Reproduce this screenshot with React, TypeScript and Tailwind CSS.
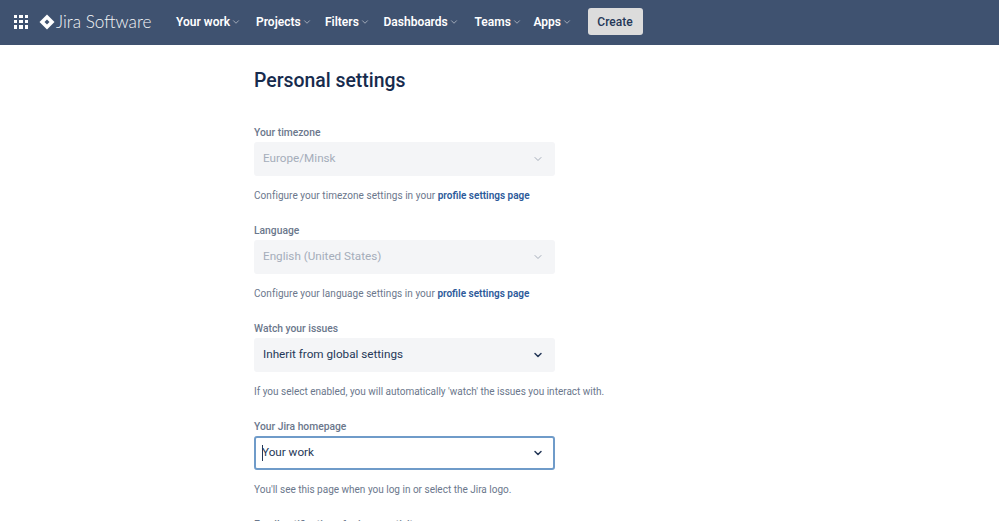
import React from 'react';
import { ChevronDown } from 'lucide-react';

const navItems = ['Your work', 'Projects', 'Filters', 'Dashboards', 'Teams', 'Apps'];

const navGaps: Record<string, string> = {
  'Your work': 'w-[80px]',
  Projects: 'w-[69px]',
  Filters: 'w-[58.5px]',
  Dashboards: 'w-[91px]',
  Teams: 'w-[59px]',
  Apps: 'w-[50px]',
};

interface FieldProps {
  label: string;
  value: string;
  disabled?: boolean;
  focused?: boolean;
  help: string;
  link?: string;
}

const Field: React.FC<FieldProps> = ({ label, value, disabled, focused, help, link }) => (
  <div className="h-[98px]">
    <div className="h-[18px] pt-[1px] text-[10.3px] leading-[17px] font-medium text-[#6b778c]">{label}</div>
    <div
      className={
        focused
          ? 'mt-[1px] h-[34px] flex items-center justify-between rounded-[3px] border-2 border-[#6f9bc9] bg-white pl-[6px] pr-[9px] text-[#253858]'
          : 'mt-[1px] h-[34px] flex items-center justify-between rounded-[3px] bg-[#f4f5f7] pl-[9px] pr-[11px] ' +
            (disabled ? 'text-[#a5adba]' : 'text-[#253858]')
      }
    >
      <span className="flex items-center text-[11.7px]">
        {focused && <span className="w-px h-[16px] bg-[#253858] -mr-px" />}
        {value}
      </span>
      <ChevronDown size={12} strokeWidth={disabled ? 2 : 3} className={disabled ? 'text-[#a5adba]' : 'text-[#253858]'} />
    </div>
    <div className="mt-[12px] text-[10px] leading-[16px] text-[#6b778c] whitespace-nowrap">
      <span className={link ? 'tracking-[0.05px]' : ''}>{help}</span>
      {link && <span className="font-semibold text-[#2c5a9a]"> {link}</span>}
    </div>
  </div>
);

const App: React.FC = () => {
  return (
    <div className="h-[521px] overflow-hidden bg-white font-['Roboto',sans-serif]">
      <header className="h-[45px] pb-[2px] flex items-center bg-[#3f5270] text-white">
        <div className="ml-[14px] w-[14px] h-[14px] grid grid-cols-3 gap-[2px]">
          {Array.from({ length: 9 }).map((_, i) => (
            <span key={i} className="bg-white" />
          ))}
        </div>
        <svg width="16" height="16" viewBox="0 0 16 16" className="ml-[11px]">
          <path d="M8 0.5 15.5 8 8 15.5 0.5 8Z" fill="#fff" />
          <path d="M8 5.5 10.5 8 8 10.5 5.5 8Z" fill="#3f5270" />
        </svg>
        <span className="ml-[1px] w-[97px] text-[17.2px] font-light whitespace-nowrap text-[#f4f5f7] font-['Lato',sans-serif]">Jira Software</span>
        <nav className="ml-[23px] flex items-center">
          {navItems.map(item => (
            <div key={item} className={navGaps[item] + ' flex items-center text-[12px] font-semibold whitespace-nowrap'}>
              {item}
              <ChevronDown size={10} strokeWidth={2} className="ml-[1px] text-[#b3bac5]" />
            </div>
          ))}
        </nav>
        <button className="ml-[4px] h-[27px] w-[55px] rounded-[3px] bg-[#dcdcdc] text-[12px] font-medium text-[#253858]">
          Create
        </button>
      </header>

      <main className="ml-[254px] w-[301px]">
        <h1 className="mt-[22px] h-[28px] text-[19.4px] leading-[28px] font-medium text-[#172b4d]">Personal settings</h1>
        <div className="mt-[28px]">
          <Field
            label="Your timezone"
            value="Europe/Minsk"
            disabled
            help="Configure your timezone settings in your"
            link="profile settings page"
          />
          <Field
            label="Language"
            value="English (United States)"
            disabled
            help="Configure your language settings in your"
            link="profile settings page"
          />
          <Field
            label="Watch your issues"
            value="Inherit from global settings"
            help="If you select enabled, you will automatically 'watch' the issues you interact with."
          />
          <Field
            label="Your Jira homepage"
            value="Your work"
            focused
            help="You'll see this page when you log in or select the Jira logo."
          />
          <div className="h-[18px] pt-[1px] text-[10.3px] leading-[17px] font-medium text-[#6b778c]">Email notifications for issue activity</div>
        </div>
      </main>
    </div>
  );
};

export default App;
